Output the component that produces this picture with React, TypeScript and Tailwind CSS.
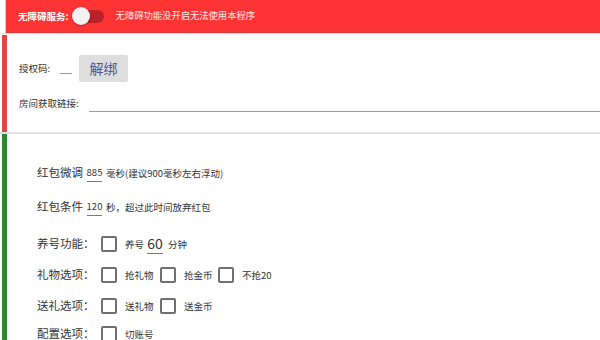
import React from "react";

function Box() {
  return <div className="w-[16px] h-[16px] border-[2px] border-[#707070] rounded-[2px] shrink-0 bg-white" />;
}

function Opt({ label, w }: { label: string; w: string }) {
  return (
    <div className={`flex items-center ${w}`}>
      <Box />
      <span className="ml-[8px] text-[9.5px] text-[#333]">{label}</span>
    </div>
  );
}

export default function App() {
  return (
    <div
      className="w-[600px] h-[340px] overflow-hidden bg-white flex flex-col"
      style={{ fontFamily: '"Noto Sans CJK SC", "Noto Sans", sans-serif' }}
    >
      {/* header */}
      <div className="flex h-[33px] shrink-0">
        <div className="w-[6px] bg-white border-r border-[#d0d0d0]" />
        <div className="flex-1 bg-[#fe3333] border-b border-[#d23a3a] flex items-center pl-[12px]">
          <span className="text-white text-[9.5px] font-bold">无障碍服务:</span>
          <div className="relative ml-[3px] w-[32px] h-[18px] flex items-center">
            <div className="absolute left-[8px] right-0 h-[13px] rounded-full bg-[#bb2129]" />
            <div className="absolute left-0 w-[18px] h-[18px] rounded-full bg-[#f2f2f2] shadow-[0_1px_2px_rgba(0,0,0,0.3)]" />
          </div>
          <span className="ml-[12px] text-white/90 text-[9.3px]">无障碍功能没开启无法使用本程序</span>
        </div>
      </div>
      <div className="h-[2px] shrink-0 bg-gradient-to-b from-[#f0d0d0] to-white" />

      {/* section 2 */}
      <div className="flex h-[97px] shrink-0">
        <div className="ml-[2px] w-[5px] bg-[#e04646]" />
        <div className="flex-1 flex flex-col pl-[12px] pt-[20px]">
          <div className="flex h-[27px] items-center">
            <span className="w-[41px] text-[9.5px] text-[#333]">授权码:</span>
            <div className="w-[12px] h-[1.5px] bg-[#9a9a9a] self-end mb-[8px]" />
            <div className="ml-[7px] w-[49px] h-[27px] rounded-[2px] bg-[#dedede] flex items-center justify-center text-[14px] text-[#55559a]">
              解绑
            </div>
          </div>
          <div className="flex mt-[11px] h-[20px] items-center">
            <span className="w-[70px] text-[9.5px] text-[#333]">房间获取链接:</span>
            <div className="flex-1 h-[19px] self-start border-b-[1.5px] border-[#9e9e9e]" />
          </div>
        </div>
      </div>
      <div className="h-[2px] shrink-0 bg-[#e2e2e2]" />

      {/* section 3 */}
      <div className="flex flex-1">
        <div className="ml-[2px] w-[5px] bg-[#2b8a2b]" />
        <div className="flex-1 flex flex-col pl-[30px] pt-[29px] text-[#333]">
          <div className="flex h-[20px] items-center">
            <span className="text-[11.5px]">红包微调</span>
            <span className="ml-[4px] w-[15px] h-[18px] flex items-center justify-center border-b border-[#777] text-[9.5px]">885</span>
            <span className="ml-[4px] text-[9.5px]">毫秒(建议900毫秒左右浮动)</span>
          </div>
          <div className="flex h-[20px] items-center mt-[14px]">
            <span className="text-[11.5px]">红包条件</span>
            <span className="ml-[4px] w-[15px] h-[18px] flex items-center justify-center border-b border-[#777] text-[9.5px]">120</span>
            <span className="ml-[4px] text-[9.5px]">秒，超过此时间放弃红包</span>
          </div>
          <div className="flex h-[20px] items-center mt-[17px]">
            <span className="w-[64px] text-[11.5px]">养号功能：</span>
            <Box />
            <span className="ml-[8px] text-[9.5px]">养号</span>
            <span className="ml-[3px] w-[16px] h-[19px] flex items-center justify-center border-b border-[#777] text-[14px]">60</span>
            <span className="ml-[5px] text-[9.5px]">分钟</span>
          </div>
          <div className="flex h-[20px] items-center mt-[11px]">
            <span className="w-[64px] text-[11.5px]">礼物选项：</span>
            <Opt label="抢礼物" w="w-[59px]" />
            <Opt label="抢金币" w="w-[58px]" />
            <Opt label="不抢20" w="w-[60px]" />
          </div>
          <div className="flex h-[20px] items-center mt-[11px]">
            <span className="w-[64px] text-[11.5px]">送礼选项：</span>
            <Opt label="送礼物" w="w-[59px]" />
            <Opt label="送金币" w="w-[58px]" />
          </div>
          <div className="flex h-[20px] items-center mt-[8px]">
            <span className="w-[64px] text-[11.5px]">配置选项：</span>
            <Opt label="切账号" w="w-[59px]" />
          </div>
        </div>
      </div>
    </div>
  );
}
